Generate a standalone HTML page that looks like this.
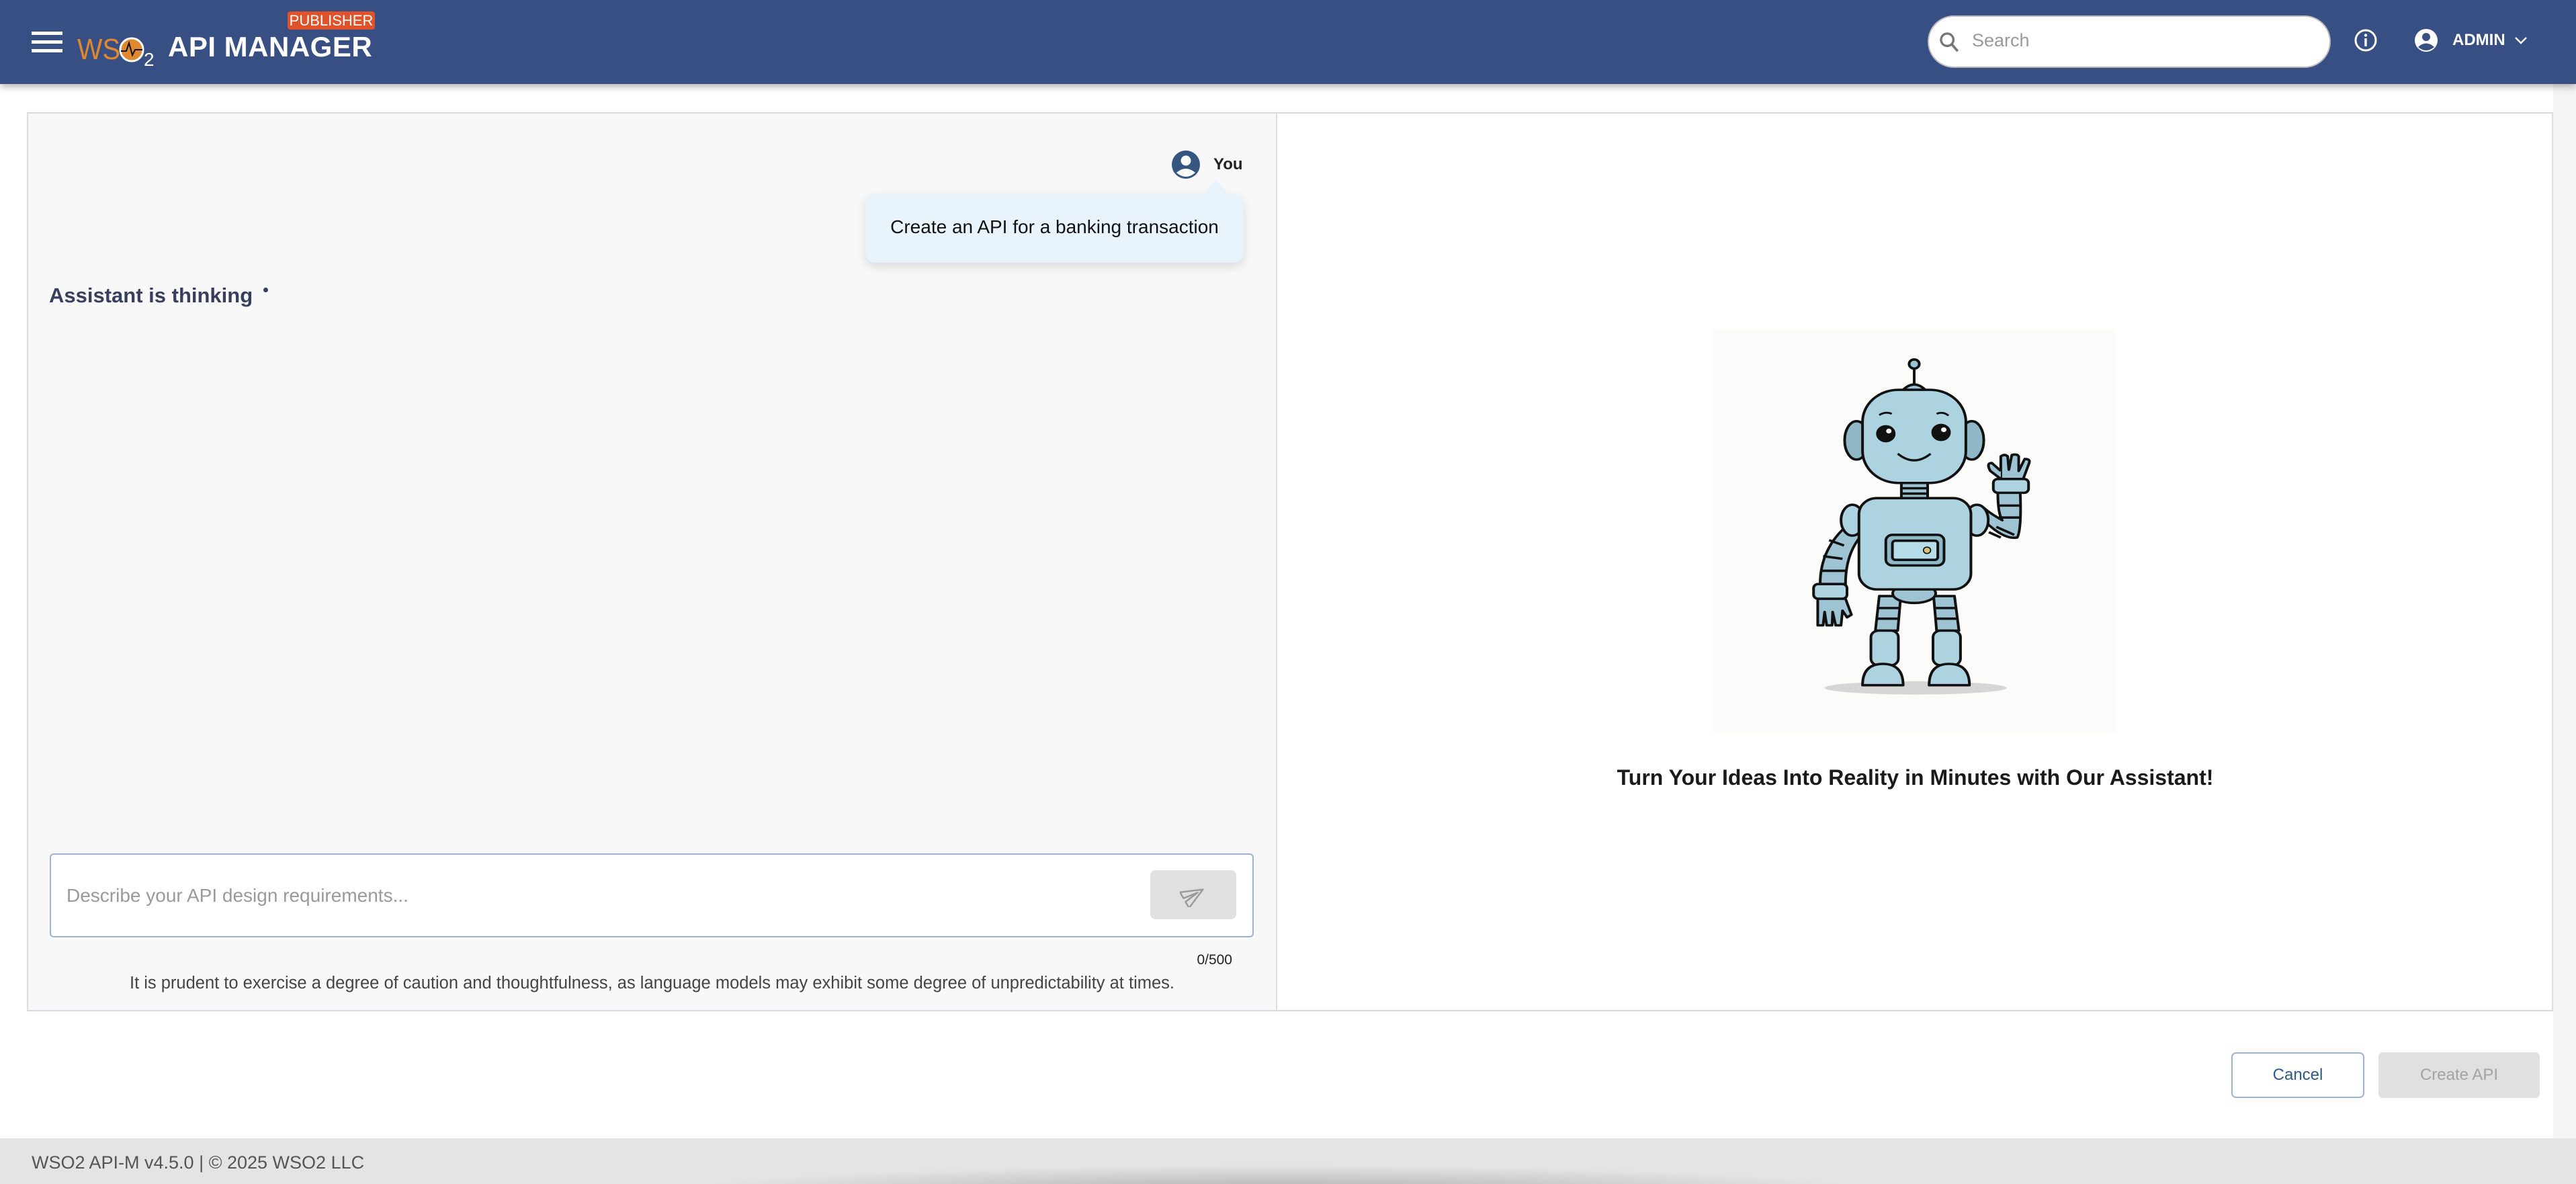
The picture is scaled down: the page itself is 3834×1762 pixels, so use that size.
<!DOCTYPE html>
<html><head><meta charset="utf-8"><style>
*{box-sizing:border-box;margin:0;padding:0}
html,body{width:3834px;height:1762px;overflow:hidden;background:#fff;font-family:"Liberation Sans",sans-serif;position:relative}
.abs{position:absolute}
#hdr{left:0;top:0;width:3834px;height:125px;background:#384f84;box-shadow:0 4px 10px rgba(0,0,0,.3);z-index:2}
.ham{left:47px;width:46px;height:5px;background:#fff}
#panel{left:40px;top:167px;width:3760px;height:1338px;border:2px solid #dcdde3;background:#fff}
#left{left:40px;top:167px;width:1861px;height:1338px;background:#f8f8f8;border:2px solid #dcdde3}
#footer{left:0;top:1694px;width:3834px;height:68px;background:#e4e4e4;overflow:hidden}
</style></head><body>
<div id="hdr" class="abs">
  <div class="abs ham" style="top:47px"></div>
  <div class="abs ham" style="top:60px"></div>
  <div class="abs ham" style="top:73px"></div>
  <svg class="abs" style="left:115px;top:50px" width="125" height="50" viewBox="0 0 125 50">
    <text x="0" y="38" font-family="Liberation Sans" font-size="44" fill="#e0882e" textLength="64" lengthAdjust="spacingAndGlyphs">WS</text>
    <circle cx="81" cy="24" r="17" fill="#e0882e" stroke="#fff" stroke-width="3"/>
    <path d="M65 26 L73 26 L77 14 L82 32 L86 24 L97 24" stroke="#111" stroke-width="2" fill="none"/>
    <text x="99" y="48" font-family="Liberation Sans" font-size="28" fill="#fff">2</text>
  </svg>
  <div class="abs" style="left:428px;top:17px;width:130px;height:27px;background:#e0532a;border-radius:4px;color:#fff;font-size:22px;line-height:27px;text-align:center">PUBLISHER</div>
  <div class="abs" style="left:250px;top:46px;color:#fff;font-weight:bold;font-size:42px;line-height:48px;letter-spacing:0.5px">API MANAGER</div>
  <div class="abs" style="left:2869px;top:23px;width:600px;height:78px;background:#fff;border-radius:39px;border:2px solid #bbb"></div>
  <svg class="abs" style="left:2884px;top:44px" width="34" height="36" viewBox="0 0 24 24"><circle cx="10" cy="10" r="6.5" stroke="#777" stroke-width="2.4" fill="none"/><path d="M15 15 L21 22" stroke="#777" stroke-width="2.6"/></svg>
  <div class="abs" style="left:2935px;top:43px;color:#9a9a9a;font-size:27px;line-height:34px">Search</div>
  <svg class="abs" style="left:3503px;top:42px" width="36" height="36" viewBox="0 0 36 36"><circle cx="18" cy="18" r="15" stroke="#fff" stroke-width="3" fill="none"/><rect x="16.3" y="15" width="3.4" height="12" fill="#fff"/><circle cx="18" cy="10.5" r="2.2" fill="#fff"/></svg>
  <svg class="abs" style="left:3593px;top:42px" width="36" height="36" viewBox="0 0 36 36"><circle cx="18" cy="18" r="17" fill="#fff"/><circle cx="18" cy="13" r="6" fill="#384f84"/><path d="M6 28 Q18 17 30 28 Q18 38 6 28Z" fill="#384f84"/></svg>
  <div class="abs" style="left:3650px;top:45px;color:#fff;font-weight:bold;font-size:24px;line-height:30px">ADMIN</div>
  <svg class="abs" style="left:3741px;top:50px" width="22" height="20" viewBox="0 0 22 20"><path d="M3 6 L11 14 L19 6" stroke="#fff" stroke-width="2.5" fill="none"/></svg>
</div>
<div class="abs" style="left:3800px;top:125px;width:34px;height:1569px;background:#f5f5f5"></div>
<div id="panel" class="abs"></div>
<div id="left" class="abs"></div>
<svg class="abs" style="left:1744px;top:224px" width="42" height="42" viewBox="0 0 42 42"><circle cx="21" cy="21" r="21" fill="#34567f"/><circle cx="21" cy="15" r="7.5" fill="#fff"/><path d="M7 33 Q21 21 35 33 Q21 45 7 33Z" fill="#fff"/></svg>
<div class="abs" style="left:1806px;top:230px;font-size:24px;font-weight:bold;color:#222;line-height:30px">You</div>
<div class="abs" style="left:1288px;top:288px;width:563px;height:103px;background:#e8f3fb;border-radius:14px;box-shadow:0 6px 14px rgba(0,0,0,.12)"></div>
<div class="abs" style="left:1790px;top:268px;width:0;height:0;border-left:20px solid transparent;border-right:20px solid transparent;border-bottom:22px solid #e8f3fb"></div>
<div class="abs" style="left:1288px;top:321px;width:563px;text-align:center;font-size:28px;color:#111;line-height:34px">Create an API for a banking transaction</div>
<div class="abs" style="left:73px;top:422px;font-size:31px;font-weight:bold;color:#373f5c;line-height:36px">Assistant is thinking</div>
<div class="abs" style="left:392px;top:428px;width:7px;height:7px;border-radius:50%;background:#373f5c"></div>
<div class="abs" style="left:74px;top:1270px;width:1792px;height:125px;background:#fff;border:2px solid #9db3cf;border-radius:6px"></div>
<div class="abs" style="left:99px;top:1316px;font-size:28px;color:#9a9a9a;line-height:34px">Describe your API design requirements...</div>
<div class="abs" style="left:1712px;top:1295px;width:128px;height:73px;background:#e0e0e0;border-radius:8px"></div>
<svg class="abs" style="left:1756px;top:1314px" width="40" height="36" viewBox="0 0 24 24"><path d="M2 21 L23 12 L2 3 L2 10 L17 12 L2 14 Z" fill="none" stroke="#999" stroke-width="1.6" stroke-linejoin="round" transform="rotate(-30 12 12)"/></svg>
<div class="abs" style="left:1734px;top:1416px;width:100px;text-align:right;font-size:21px;color:#222;line-height:26px">0/500</div>
<div class="abs" style="left:40px;top:1448px;width:1861px;text-align:center;font-size:25.5px;color:#444;line-height:30px">It is prudent to exercise a degree of caution and thoughtfulness, as language models may exhibit some degree of unpredictability at times.</div>
<div class="abs" style="left:2549px;top:491px;width:600px;height:600px;background:#fbfbfa"></div>
<svg class="abs" style="left:2549px;top:491px" width="600" height="600" viewBox="110 30 1350 1515" preserveAspectRatio="none">
<g stroke="#111" stroke-width="9" stroke-linejoin="round">
<ellipse cx="790" cy="1375" rx="305" ry="25" fill="#d6d6d6" stroke="none"/>
<line x1="785" y1="175" x2="785" y2="240"/>
<circle cx="785" cy="158" r="17" fill="#9ec4d4"/>
<path d="M748 255 Q785 215 822 255Z" fill="#9ec4d4"/>
<ellipse cx="592" cy="445" rx="40" ry="72" fill="#8fb7c8"/>
<ellipse cx="978" cy="445" rx="40" ry="72" fill="#8fb7c8"/>
<rect x="612" y="255" width="346" height="350" rx="120" fill="#aed3e0"/>
<rect x="742" y="605" width="88" height="62" fill="#9ec4d4"/>
<line x1="742" y1="625" x2="830" y2="625"/><line x1="742" y1="645" x2="830" y2="645"/>
<path d="M565 760 Q470 850 470 985 L555 985 Q555 870 610 800Z" fill="#9ec4d4"/>
<path d="M500 820 L550 840 M480 880 L545 890 M472 935 L555 935" fill="none"/>
<ellipse cx="578" cy="745" rx="38" ry="58" fill="#aed3e0"/>
<path d="M462 1040 L462 1140 L480 1140 L485 1090 L492 1140 L510 1140 L512 1090 L522 1140 L540 1140 L545 1085 L560 1110 L575 1100 L555 1040Z" fill="#9ec4d4"/>
<rect x="448" y="985" width="112" height="55" rx="15" fill="#aed3e0"/>
<path d="M1005 730 Q1080 820 1130 810 Q1145 780 1140 640 L1065 640 Q1065 720 1080 745 Q1040 720 1020 700Z" fill="#9ec4d4"/>
<path d="M1065 690 L1140 690 M1068 735 L1140 735 M1060 770 L1120 800 M1035 790 L1075 810" fill="none"/>
<ellipse cx="995" cy="745" rx="38" ry="58" fill="#aed3e0"/>
<path d="M1075 590 L1075 505 Q1088 495 1098 505 L1102 555 L1112 500 Q1130 495 1135 505 L1135 560 L1155 515 Q1175 515 1170 530 L1150 590Z" fill="#9ec4d4"/>
<path d="M1075 590 L1040 560 Q1025 530 1045 530 L1075 560" fill="#9ec4d4"/>
<rect x="1050" y="590" width="118" height="52" rx="15" fill="#aed3e0"/>
<path d="M668 1030 L740 1030 L730 1160 L655 1160Z" fill="#9ec4d4"/>
<path d="M664 1075 L737 1075 M660 1115 L734 1115" fill="none"/>
<path d="M850 1030 L920 1030 L935 1160 L860 1160Z" fill="#9ec4d4"/>
<path d="M852 1075 L925 1075 M856 1115 L930 1115" fill="none"/>
<ellipse cx="785" cy="1020" rx="72" ry="36" fill="#9ec4d4"/>
<rect x="640" y="1160" width="92" height="130" rx="25" fill="#aed3e0"/>
<rect x="848" y="1160" width="92" height="130" rx="25" fill="#aed3e0"/>
<path d="M612 1365 Q612 1285 680 1285 Q748 1285 748 1365Z" fill="#aed3e0"/>
<path d="M835 1365 Q835 1285 902 1285 Q970 1285 970 1365Z" fill="#aed3e0"/>
<rect x="600" y="662" width="375" height="343" rx="60" fill="#aed3e0"/>
<rect x="690" y="800" width="195" height="115" rx="22" fill="#8fb7c8"/>
<rect x="712" y="822" width="152" height="72" rx="10" fill="#b6dce8"/>
<circle cx="828" cy="858" r="12" fill="#d9c27a" stroke-width="4"/>
<circle cx="690" cy="420" r="28" fill="#111"/>
<circle cx="875" cy="415" r="28" fill="#111"/>
<path d="M668 350 Q688 335 710 345 M860 345 Q882 335 900 352" fill="none" stroke-width="7"/>
<path d="M730 495 Q785 545 840 495" fill="none" stroke-width="8"/>
</g>
<circle cx="700" cy="410" r="9" fill="#fff"/><circle cx="884" cy="405" r="9" fill="#fff"/>
</svg>
<div class="abs" style="left:1902px;top:1138px;width:1897px;text-align:center;font-size:32px;font-weight:bold;color:#1a1a1a;line-height:38px">Turn Your Ideas Into Reality in Minutes with Our Assistant!</div>
<div class="abs" style="left:3321px;top:1566px;width:198px;height:68px;border:2px solid #9db3cf;border-radius:7px;background:#fff;color:#2f5a8a;font-size:24px;line-height:64px;text-align:center">Cancel</div>
<div class="abs" style="left:3540px;top:1566px;width:240px;height:68px;border-radius:7px;background:#e0e0e0;color:#a3a3a3;font-size:24px;line-height:68px;text-align:center">Create API</div>
<div id="footer" class="abs">
  <div class="abs" style="left:1000px;top:40px;width:1800px;height:80px;border-radius:50%;background:radial-gradient(ellipse at center,rgba(120,120,120,.5),rgba(200,200,200,0) 70%)"></div>
  <div class="abs" style="left:47px;top:20px;font-size:27px;color:#555;line-height:32px">WSO2 API-M v4.5.0 | © 2025 WSO2 LLC</div>
</div>
</body></html>
